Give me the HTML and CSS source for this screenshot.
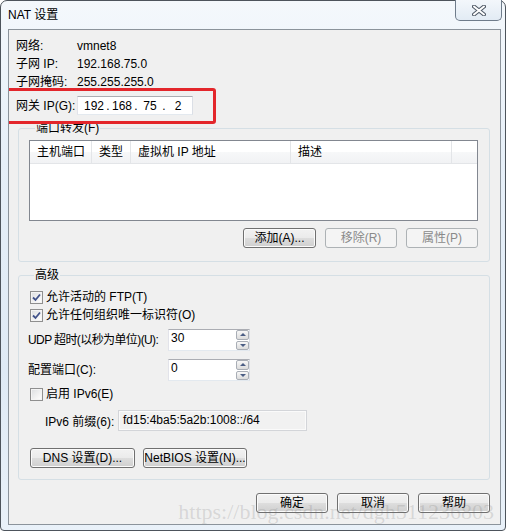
FILE: index.html
```html
<!DOCTYPE html>
<html lang="zh-CN">
<head>
    <meta charset="UTF-8">
    <meta name="viewport" content="width=device-width, initial-scale=1.0">
    <title>NAT 设置</title>
    <link rel="stylesheet" href="styles.css">
</head>
<body>
    <div class="window">
        <div class="titlebar">
            <span class="title">NAT 设置</span>
            <button class="close-btn" aria-label="关闭">
                <svg width="14" height="11" viewBox="0 0 14 11">
                    <path d="M2 1.5 L12 9.5 M12 1.5 L2 9.5" stroke="#4f5966" stroke-width="4" stroke-linecap="round"/>
                    <path d="M2 1.5 L12 9.5 M12 1.5 L2 9.5" stroke="#ffffff" stroke-width="2" stroke-linecap="round"/>
                </svg>
            </button>
        </div>

        <div class="client">
            <div class="info">
                <div class="info-row"><span class="info-label">网络:</span><span>vmnet8</span></div>
                <div class="info-row"><span class="info-label">子网 IP:</span><span>192.168.75.0</span></div>
                <div class="info-row"><span class="info-label">子网掩码:</span><span>255.255.255.0</span></div>
                <div class="info-row gateway-row">
                    <span class="info-label">网关 IP(G):</span>
                    <div class="ip-input">
                        <span class="ip-part">192</span><span class="ip-dot">.</span>
                        <span class="ip-part">168</span><span class="ip-dot">.</span>
                        <span class="ip-part">75</span><span class="ip-dot">.</span>
                        <span class="ip-part">2</span>
                    </div>
                </div>
            </div>

            <!-- red annotation box drawn over the gateway row -->
            <div class="highlight"></div>

            <fieldset class="group port-group">
                <legend>端口转发(F)</legend>
                <div class="list-view">
                    <div class="list-header">
                        <div class="col col-port">主机端口</div>
                        <div class="col col-type">类型</div>
                        <div class="col col-ip">虚拟机 IP 地址</div>
                        <div class="col col-desc">描述</div>
                        <div class="col col-fill"></div>
                    </div>
                </div>
                <div class="btn-row">
                    <button class="btn btn-add">添加(A)...</button>
                    <button class="btn btn-small" disabled>移除(R)</button>
                    <button class="btn btn-small" disabled>属性(P)</button>
                </div>
            </fieldset>

            <fieldset class="group adv-group">
                <legend>高级</legend>
                <div class="check-row first-check">
                    <span class="check checked">
                        <svg width="11" height="11" viewBox="0 0 11 11"><path d="M2 5.5 L4.5 8 L9 2.5" fill="none" stroke="#41528a" stroke-width="1.8"/></svg>
                    </span>
                    <span>允许活动的 FTP(T)</span>
                </div>
                <div class="check-row">
                    <span class="check checked">
                        <svg width="11" height="11" viewBox="0 0 11 11"><path d="M2 5.5 L4.5 8 L9 2.5" fill="none" stroke="#41528a" stroke-width="1.8"/></svg>
                    </span>
                    <span>允许任何组织唯一标识符(O)</span>
                </div>
                <div class="field-row udp-row">
                    <span class="field-label">UDP 超时(以秒为单位)(U):</span>
                    <div class="spin">
                        <span class="spin-value">30</span>
                        <div class="spin-btns">
                            <span class="spin-btn"><span class="arrow-up"></span></span>
                            <span class="spin-btn"><span class="arrow-down"></span></span>
                        </div>
                    </div>
                </div>
                <div class="field-row port-row">
                    <span class="field-label">配置端口(C):</span>
                    <div class="spin">
                        <span class="spin-value">0</span>
                        <div class="spin-btns">
                            <span class="spin-btn"><span class="arrow-up"></span></span>
                            <span class="spin-btn"><span class="arrow-down"></span></span>
                        </div>
                    </div>
                </div>
                <div class="check-row ipv6-check">
                    <span class="check"></span>
                    <span>启用 IPv6(E)</span>
                </div>
                <div class="prefix-row">
                    <span class="prefix-label">IPv6 前缀(6):</span>
                    <div class="prefix-input">fd15:4ba5:5a2b:1008::/64</div>
                </div>
                <div class="adv-btns">
                    <button class="btn btn-dns">DNS 设置(D)...</button>
                    <button class="btn btn-netbios">NetBIOS 设置(N)...</button>
                </div>
            </fieldset>

            <div class="dialog-btns">
                <button class="btn btn-dialog">确定</button>
                <button class="btn btn-dialog">取消</button>
                <button class="btn btn-dialog">帮助</button>
            </div>

            <div class="watermark">https://blog.csdn.net/dgh511236803</div>
        </div>
    </div>
</body>
</html>
```

FILE: styles.css
```css
:root {
    --dialog-bg: #f0f0f0;
    --text: #000000;
    --group-border: #d5dfe5;
    --input-border: #abadb3;
    --btn-border: #707070;
    --disabled-text: #8a8a8a;
}

* {
    margin: 0;
    padding: 0;
    box-sizing: border-box;
}

body {
    background-color: #ffffff;
    font-family: "Liberation Sans", "Noto Sans CJK SC", sans-serif;
    font-size: 12px;
    color: var(--text);
}

button {
    font: inherit;
    color: inherit;
}

.window {
    width: 506px;
    height: 531px;
    border: 1px solid #4d545c;
    border-radius: 7px 7px 4px 4px;
    padding: 0 4px 5px 7px;
    display: flex;
    flex-direction: column;
    background: linear-gradient(180deg, #f4f8fc 0%, #e6eff8 30%, #dfeaf5 70%, #e9f1f9 100%);
}

.titlebar {
    height: 28px;
    display: flex;
    align-items: center;
}

.title {
    font-size: 12px;
    line-height: 16px;
    color: #000;
}

.close-btn {
    margin-left: auto;
    margin-right: -1px;
    align-self: flex-start;
    margin-top: -1px;
    width: 47px;
    height: 21px;
    border: 1px solid #6f7c8b;
    border-top: none;
    border-radius: 0 0 5px 5px;
    background: linear-gradient(180deg, #f3f7fb 0%, #e2ebf4 100%);
    display: flex;
    align-items: center;
    justify-content: center;
    padding-top: 1px;
}

.client {
    flex: 1;
    position: relative;
    background-color: var(--dialog-bg);
    border: 1px solid #8b939b;
    padding-top: 7px;
    overflow: hidden;
}

/* Network info */
.info {
    padding-left: 7px;
}

.info-row {
    display: flex;
    align-items: center;
    height: 18px;
    line-height: 18px;
}

.info-label {
    width: 61px;
    flex-shrink: 0;
}

.gateway-row {
    margin-top: 5px;
    height: 19px;
}

.ip-input {
    width: 116px;
    height: 19px;
    background: #fff;
    border: 1px solid;
    border-color: #abadb3 #dbdfe6 #e3e9ef #e2e3ea;
    display: flex;
    align-items: center;
    padding-left: 5px;
    line-height: 16px;
}

.ip-part {
    width: 22px;
    text-align: center;
}

.ip-dot {
    width: 6px;
    text-align: center;
}

.highlight {
    position: absolute;
    left: -4px;
    top: 58px;
    width: 211px;
    height: 36px;
    border: 3px solid #e3262b;
    border-radius: 3px;
}

/* Group boxes */
.group {
    margin: 5px 0 0 9px;
    width: 472px;
    border: 1px solid var(--group-border);
    border-radius: 3px;
}

.group legend {
    margin-left: 6px;
    padding: 0 1px;
    line-height: 16px;
    height: 16px;
}

.port-group {
    padding: 4px 11px 13px 10px;
}

.list-view {
    height: 81px;
    background: #fff;
    border: 1px solid #828790;
}

.list-header {
    display: flex;
    height: 23px;
    line-height: 22px;
    background: linear-gradient(180deg, #ffffff 0%, #ffffff 50%, #f7f8f9 51%, #f1f2f4 100%);
    border-bottom: 1px solid #e3e5e8;
}

.col {
    padding-left: 7px;
    border-right: 1px solid #e3e5e8;
    white-space: nowrap;
}

.col-port { width: 62px; }
.col-type { width: 39px; }
.col-ip { width: 160px; }
.col-desc { width: 161px; }
.col-fill { flex: 1; border-right: none; }

.btn-row {
    display: flex;
    justify-content: flex-end;
    gap: 9px;
    margin-top: 7px;
}

.btn {
    height: 20px;
    border: 1px solid var(--btn-border);
    border-radius: 3px;
    background: linear-gradient(180deg, #f2f2f2 0%, #ebebeb 48%, #dddddd 52%, #cfcfcf 100%);
    box-shadow: inset 0 0 0 1px #fbfbfb;
    line-height: 17px;
    text-align: center;
    white-space: nowrap;
    cursor: pointer;
}

.btn:disabled {
    border-color: #adb2b5;
    background: #f4f4f4;
    box-shadow: none;
    color: var(--disabled-text);
}

.btn-add { width: 73px; }
.btn-small { width: 72px; }

/* Advanced group */
.adv-group {
    padding: 5px 0 11px 9px;
}

.check-row {
    display: flex;
    align-items: center;
    height: 18px;
    line-height: 18px;
    padding-left: 2px;
}

.check {
    width: 13px;
    height: 13px;
    border: 1px solid #8f8f8f;
    background: linear-gradient(135deg, #dcdee0 0%, #f6f6f6 70%, #ffffff 100%);
    box-shadow: inset 0 0 0 1px #f4f4f4;
    margin-right: 3px;
    display: flex;
    align-items: center;
    justify-content: center;
}

.field-row {
    display: flex;
    align-items: center;
    height: 22px;
}

.udp-row { margin-top: 5px; }
.port-row { margin-top: 8px; }

.field-label {
    width: 140px;
    flex-shrink: 0;
    line-height: 18px;
    white-space: nowrap;
}

.udp-row .field-label {
    letter-spacing: -0.6px;
}

.spin {
    width: 82px;
    height: 22px;
    display: flex;
    background: #fff;
    border: 1px solid;
    border-color: #abadb3 #dbdfe6 #e3e9ef #e2e3ea;
}

.spin-value {
    flex: 1;
    padding-left: 2px;
    line-height: 16px;
}

.spin-btns {
    display: flex;
    flex-direction: column;
    gap: 1px;
}

.spin-btn {
    width: 13px;
    height: 10px;
    border: 1px solid #a9aeb6;
    border-radius: 2px;
    background: linear-gradient(180deg, #f8f8f8 0%, #e9e9e9 50%, #dcdcdc 100%);
    display: flex;
    align-items: center;
    justify-content: center;
}

.arrow-up {
    width: 0;
    height: 0;
    border-left: 3px solid transparent;
    border-right: 3px solid transparent;
    border-bottom: 3px solid #4b5e85;
}

.arrow-down {
    width: 0;
    height: 0;
    border-left: 3px solid transparent;
    border-right: 3px solid transparent;
    border-top: 3px solid #4b5e85;
}

.ipv6-check {
    margin-top: 4px;
}

.prefix-row {
    display: flex;
    align-items: center;
    margin-top: 7px;
    padding-left: 17px;
    height: 21px;
}

.prefix-label {
    width: 73px;
    flex-shrink: 0;
}

.prefix-input {
    width: 189px;
    height: 21px;
    border: 1px solid #d3d5d9;
    background: #f1f1f1;
    box-shadow: inset 0 0 0 1px #fafafa;
    padding-left: 4px;
    line-height: 18px;
}

.adv-btns {
    display: flex;
    gap: 8px;
    margin-top: 17px;
    padding-left: 2px;
}

.btn-dns { width: 105px; }
.btn-netbios { width: 104px; }

.dialog-btns {
    display: flex;
    justify-content: flex-end;
    gap: 9px;
    margin: 13px 0 0 9px;
    width: 472px;
}

.btn-dialog { width: 72px; }

.watermark {
    position: absolute;
    right: 6px;
    bottom: 1px;
    font-family: "Liberation Serif", serif;
    font-size: 22px;
    line-height: 22px;
    color: rgba(110, 110, 110, 0.2);
    white-space: nowrap;
    pointer-events: none;
}
```
